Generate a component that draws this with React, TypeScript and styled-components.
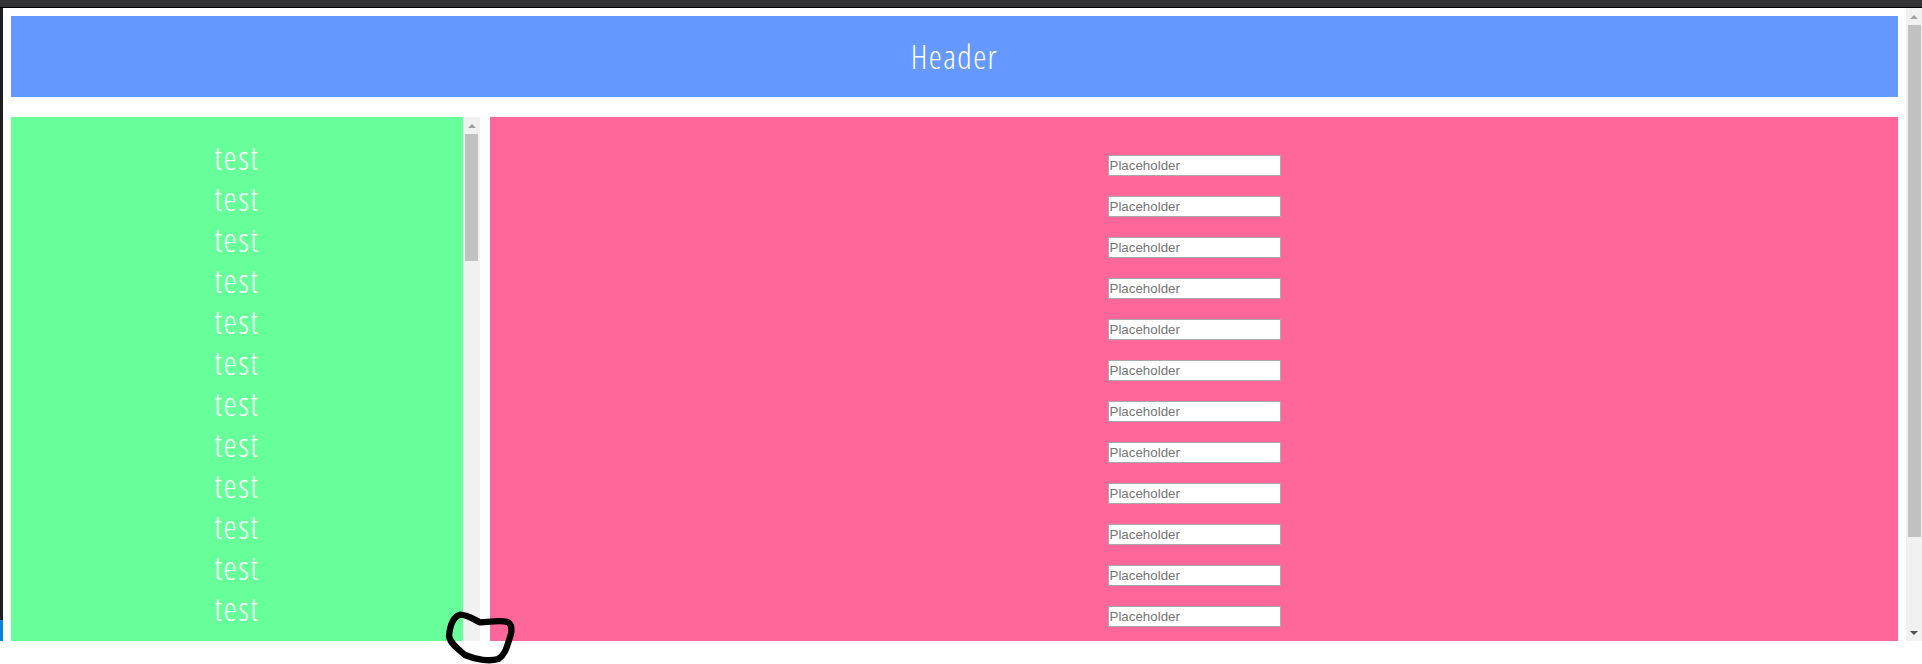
import React from "react";
import styled, { createGlobalStyle } from "styled-components";

const Global = createGlobalStyle`
  html, body { margin: 0; padding: 0; background: #fff; overflow: hidden; }
  #root { height: 664px; }
`;

const Screen = styled.div`
  position: relative;
  width: 1922px;
  height: 664px;
  overflow: hidden;
  display: flex;
  flex-direction: column;
  background: #fff;
`;

const WindowBar = styled.div`
  height: 7px;
  flex: none;
  background: #333335;
  border-bottom: 1px solid #000;
`;

const Body = styled.div`
  height: 633px;
  flex: none;
  display: flex;
`;

const Edge = styled.div`
  width: 3px;
  flex: none;
  display: flex;
  flex-direction: column;
  background: #1e1e1e;
`;

const EdgeSpacer = styled.div`
  flex: 1;
`;

const EdgeAccent = styled.div`
  height: 21px;
  background: #0a84d8;
`;

const Page = styled.div`
  flex: 1;
  min-width: 0;
  overflow: hidden;
  padding: 8px 8px 0;
  display: flex;
  flex-direction: column;
  gap: 20px;
`;

const Header = styled.header`
  height: 81px;
  flex: none;
  background: #6699ff;
  color: #fff;
  display: flex;
  align-items: center;
  justify-content: center;
  font: 300 33px/1 "Open Sans", Roboto, sans-serif;
  font-stretch: 75%;
  letter-spacing: 1.4px;
`;

const Main = styled.main`
  flex: 1;
  min-height: 0;
  display: flex;
  gap: 10px;
`;

const Sidebar = styled.div`
  width: 469px;
  flex: none;
  display: flex;
`;

const List = styled.div`
  flex: 1;
  background: #66ff99;
  overflow: hidden;
  padding-top: 20px;
`;

const Item = styled.div`
  height: 41px;
  color: #fff;
  text-align: center;
  font: 300 33px/41px "Open Sans", Roboto, sans-serif;
  font-stretch: 75%;
  letter-spacing: 1.6px;
`;

const Form = styled.div`
  flex: 1;
  background: #ff6699;
  overflow: hidden;
  padding-top: 38px;
  display: flex;
  flex-direction: column;
  align-items: center;
  gap: 20px;
`;

const Field = styled.input`
  width: 173px;
  height: 21px;
  flex: none;
  box-sizing: border-box;
  margin: 0;
  padding: 1px;
  background: #fff;
  border: 1px solid #a9a9a9;
  font: 13.33px "Liberation Sans", Arial, sans-serif;
  &::placeholder { color: #757575; opacity: 1; }
`;

const Scrollbar = styled.div<{ $w: number }>`
  width: ${(p) => p.$w}px;
  flex: none;
  background: #f1f1f1;
  display: flex;
  flex-direction: column;
  align-items: center;
`;

const Arrow = styled.div<{ $down?: boolean }>`
  height: 17px;
  width: 100%;
  flex: none;
  display: flex;
  align-items: center;
  justify-content: center;
  &::before {
    content: "";
    border-left: 4px solid transparent;
    border-right: 4px solid transparent;
    ${(p) =>
      p.$down
        ? "border-top: 4px solid #505050;"
        : "border-bottom: 4px solid #a3a3a3;"}
  }
`;

const Thumb = styled.div<{ $h: number }>`
  width: 13px;
  height: ${(p) => p.$h}px;
  flex: none;
  background: #c1c1c1;
`;

const Track = styled.div`
  flex: 1;
`;

const Scribble = styled.svg`
  position: absolute;
  left: 400px;
  top: 560px;
  width: 200px;
  height: 104px;
  pointer-events: none;
`;

const numbers = Array.from({ length: 12 }, (_, i) => i);

export default function App() {
  return (
    <Screen>
      <Global />
      <WindowBar />
      <Body>
        <Edge>
          <EdgeSpacer />
          <EdgeAccent />
        </Edge>
        <Page>
          <Header>Header</Header>
          <Main>
            <Sidebar>
              <List>
                {numbers.map((n) => (
                  <Item key={n}>test</Item>
                ))}
              </List>
              <Scrollbar $w={17}>
                <Arrow />
                <Thumb $h={127} />
                <Track />
              </Scrollbar>
            </Sidebar>
            <Form>
              {numbers.map((n) => (
                <Field key={n} placeholder="Placeholder" />
              ))}
            </Form>
          </Main>
        </Page>
        <Scrollbar $w={16}>
          <Arrow />
          <Thumb $h={512} />
          <Track />
          <Arrow $down />
        </Scrollbar>
      </Body>
      <Scribble viewBox="0 0 600 312">
        <path
          d="M180 164 C160 170 150 195 147 228 C150 250 175 268 195 285 C230 300 270 305 295 297 C318 282 322 255 333 222 C336 205 333 192 325 187 C300 178 270 187 240 187 C220 178 205 165 180 164 Z"
          fill="none"
          stroke="#000"
          strokeWidth="19"
          strokeLinejoin="round"
        />
      </Scribble>
    </Screen>
  );
}
